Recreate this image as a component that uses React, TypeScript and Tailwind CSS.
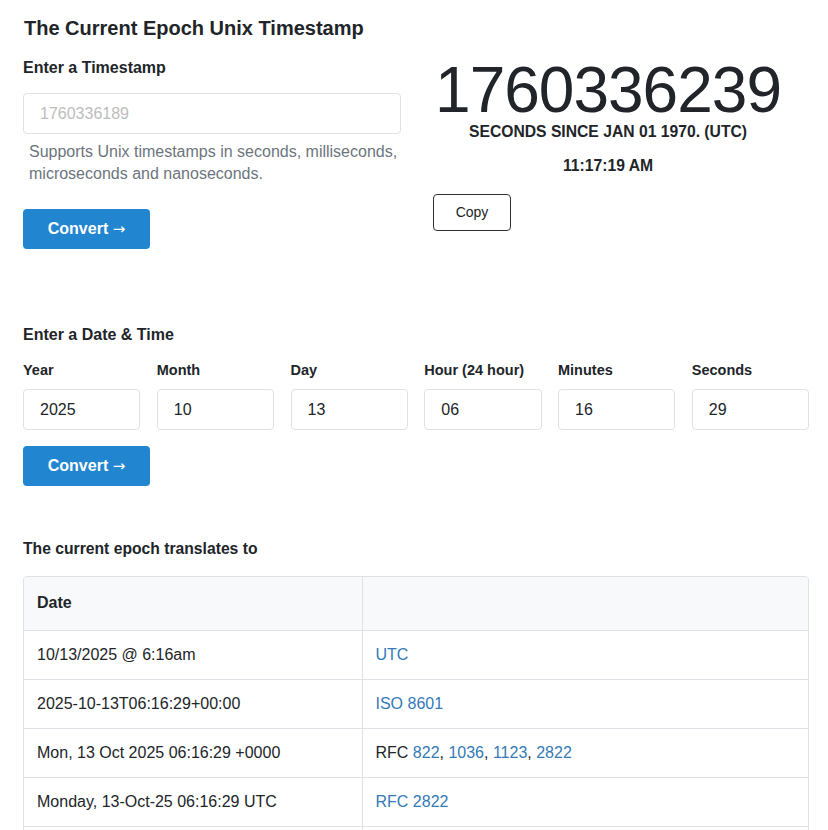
import React from 'react';

const fields = [
  { label: 'Year', value: '2025' },
  { label: 'Month', value: '10' },
  { label: 'Day', value: '13' },
  { label: 'Hour (24 hour)', value: '06' },
  { label: 'Minutes', value: '16' },
  { label: 'Seconds', value: '29' },
];

const Link = ({ children }: { children: React.ReactNode }) => (
  <a href="#" className="text-[#337ab7]">{children}</a>
);

const rows: { date: string; fmt: React.ReactNode }[] = [
  { date: '10/13/2025 @ 6:16am', fmt: <Link>UTC</Link> },
  { date: '2025-10-13T06:16:29+00:00', fmt: <Link>ISO 8601</Link> },
  {
    date: 'Mon, 13 Oct 2025 06:16:29 +0000',
    fmt: <>RFC <Link>822</Link>, <Link>1036</Link>, <Link>1123</Link>, <Link>2822</Link></>,
  },
  { date: 'Monday, 13-Oct-25 06:16:29 UTC', fmt: <Link>RFC 2822</Link> },
  { date: '2025-10-13T06:16:29+00:00', fmt: <Link>RFC 3339</Link> },
];

const ConvertButton = () => (
  <button className="w-[127px] h-[40px] rounded-[4px] bg-[#2185d0] text-white font-bold text-[16px]">
    Convert <span className="font-['DejaVu_Sans',sans-serif] font-normal text-[15px]">→</span>
  </button>
);

export default function App() {
  return (
    <div className="w-[828px] h-[830px] overflow-hidden bg-white text-[#212529] font-['Liberation_Sans',Arial,sans-serif] pl-[23px] pr-[19px]">
      <h1 className="text-[20px] font-bold pt-[16px] leading-[24px] pl-[1px]">The Current Epoch Unix Timestamp</h1>

      <div className="flex">
        <div className="w-[378px]">
          <h2 className="text-[16px] font-bold mt-[18px] leading-[20px]">Enter a Timestamp</h2>
          <input
            className="mt-[15px] w-full h-[41px] border border-[#dee2e6] rounded-[4px] px-[16px] text-[16px] outline-none placeholder:text-[#bdbdbd]"
            placeholder="1760336189"
          />
          <p className="text-[16px] leading-[22px] text-[#6c757d] mt-[7px] pl-[6px]">
            Supports Unix timestamps in seconds, milliseconds, microseconds and nanoseconds.
          </p>
          <div className="mt-[24px]">
            <ConvertButton />
          </div>
        </div>

        <div className="flex-1 pl-[29px] mt-[18px]">
          <div className="w-[356px] flex flex-col items-center">
            <div className="text-[64px] leading-[64px] text-[#212529] tracking-[-1px]">1760336239</div>
            <div className="text-[15.7px] font-bold leading-[18px] mt-[1px]">SECONDS SINCE JAN 01 1970. (UTC)</div>
            <div className="text-[15.7px] font-bold leading-[18px] mt-[16px]">11:17:19 AM</div>
          </div>
          <button className="ml-[3px] mt-[19px] w-[78px] h-[37px] border border-[#333] rounded-[4px] text-[14px]">Copy</button>
        </div>
      </div>

      <h2 className="text-[16px] font-bold mt-[76px] leading-[20px]">Enter a Date &amp; Time</h2>
      <div className="grid grid-cols-6 gap-x-[16.5px] mt-[16px]">
        {fields.map((f) => (
          <div key={f.label}>
            <div className="text-[14.5px] font-bold leading-[18px]">{f.label}</div>
            <input
              defaultValue={f.value}
              className="mt-[10px] w-full h-[41px] border border-[#dee2e6] rounded-[4px] px-[16px] text-[16px] outline-none"
            />
          </div>
        ))}
      </div>
      <div className="mt-[16px]">
        <ConvertButton />
      </div>

      <h3 className="text-[15.7px] font-bold mt-[53px] leading-[20px]">The current epoch translates to</h3>
      <div className="mt-[17px] border border-[#dee2e6] rounded-[4px] overflow-hidden">
        <table className="w-full border-collapse text-[16px]">
          <thead>
            <tr className="bg-[#f8f9fa] h-[53px]">
              <th className="w-[338px] text-left font-bold px-[13px] border-r border-[#dee2e6]">Date</th>
              <th />
            </tr>
          </thead>
          <tbody>
            {rows.map((r, i) => (
              <tr key={i} className="h-[49px] border-t border-[#dee2e6]">
                <td className="px-[13px] border-r border-[#dee2e6]">{r.date}</td>
                <td className="px-[13px]">{r.fmt}</td>
              </tr>
            ))}
          </tbody>
        </table>
      </div>
    </div>
  );
}
